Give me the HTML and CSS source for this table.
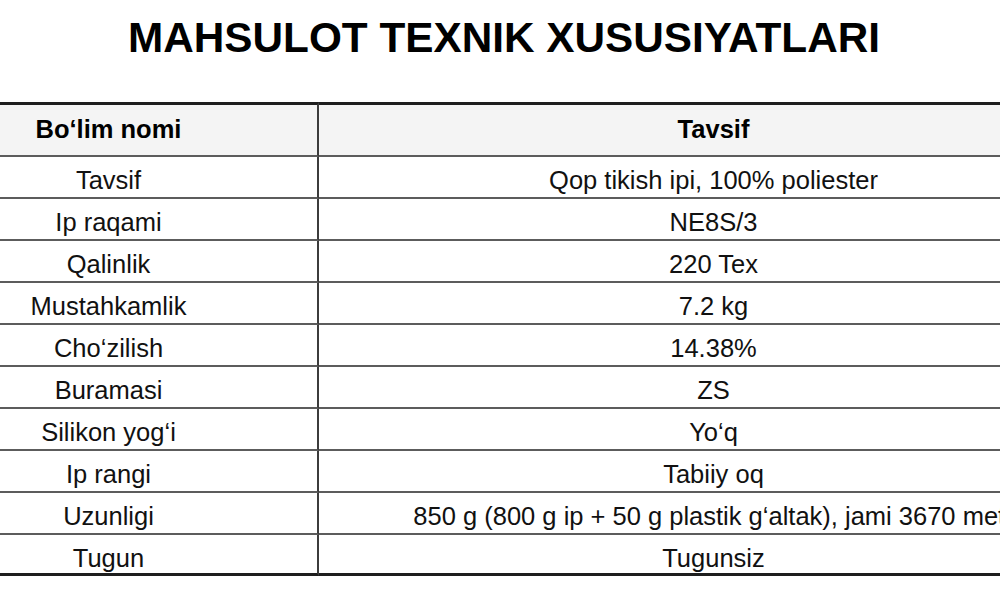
FILE: index.html
```html
<!DOCTYPE html>
<html lang="uz">
<head>
<meta charset="utf-8">
<title>Mahsulot texnik xususiyatlari</title>
<link rel="stylesheet" href="styles.css">
</head>
<body>
<div class="sheet">
  <h1 class="title">MAHSULOT TEXNIK XUSUSIYATLARI</h1>
  <table class="spec">
    <thead>
      <tr>
        <th class="col-name">Bo‘lim nomi</th>
        <th class="col-desc">Tavsif</th>
      </tr>
    </thead>
    <tbody>
      <tr><td class="col-name">Tavsif</td><td class="col-desc">Qop tikish ipi, 100% poliester</td></tr>
      <tr><td class="col-name">Ip raqami</td><td class="col-desc">NE8S/3</td></tr>
      <tr><td class="col-name">Qalinlik</td><td class="col-desc">220 Tex</td></tr>
      <tr><td class="col-name">Mustahkamlik</td><td class="col-desc">7.2 kg</td></tr>
      <tr><td class="col-name">Cho‘zilish</td><td class="col-desc">14.38%</td></tr>
      <tr><td class="col-name">Buramasi</td><td class="col-desc">ZS</td></tr>
      <tr><td class="col-name">Silikon yog‘i</td><td class="col-desc">Yo‘q</td></tr>
      <tr><td class="col-name">Ip rangi</td><td class="col-desc">Tabiiy oq</td></tr>
      <tr><td class="col-name">Uzunligi</td><td class="col-desc">850 g (800 g ip + 50 g plastik g‘altak), jami 3670 metr</td></tr>
      <tr class="last"><td class="col-name">Tugun</td><td class="col-desc">Tugunsiz</td></tr>
    </tbody>
  </table>
</div>
</body>
</html>
```
FILE: styles.css
```css
html, body {
  margin: 0;
  padding: 0;
  overflow: hidden;
  background: #ffffff;
}

body {
  font-family: "Liberation Sans", Arial, Helvetica, sans-serif;
  color: #111111;
}

.sheet {
  width: 1208px;
  margin-left: -100px;
}

.title {
  margin: 0 0 40px 0;
  padding-top: 14px;
  font-size: 42.3px;
  line-height: 48px;
  font-weight: 700;
  text-align: center;
  color: #000000;
  white-space: nowrap;
}

.spec {
  width: 1208px;
  border-collapse: separate;
  border-spacing: 0;
  table-layout: fixed;
}

.spec th,
.spec td {
  padding: 10px 0 4px 0;
  line-height: 26px;
  font-size: 25.5px;
  text-align: center;
  white-space: nowrap;
  overflow: hidden;
  border-bottom: 2px solid #5c5c5c;
}

.spec th {
  font-weight: 700;
  background: #f4f4f4;
  padding: 11px 0 13px 0;
  border-top: 3px solid #1e1e1e;
  color: #000000;
}

.spec .col-name {
  width: 417px;
  border-right: 2px solid #3c3c3c;
}

.spec tr.last td {
  padding-bottom: 2px;
  border-bottom: 3px solid #1e1e1e;
}
```
